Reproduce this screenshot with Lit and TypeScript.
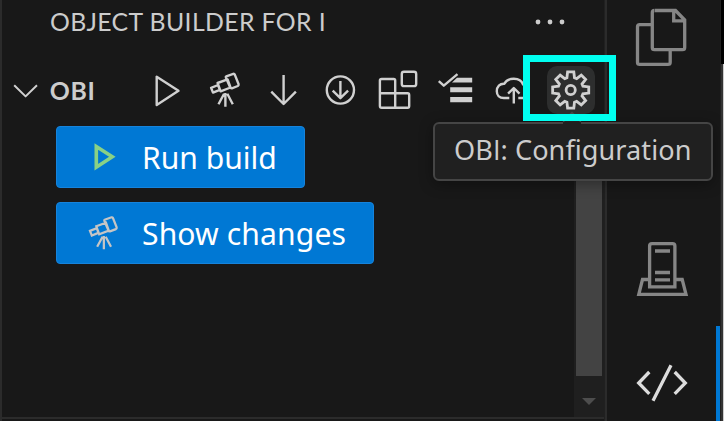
import { LitElement, html, css, svg } from "lit";

const scope = svg`<path d="M210.8 87.8 217.8 85 219.5 89.8 212.7 92.6Z M217.3 83 227.3 79.4 230.2 87.5 220.3 91.3Z M225.9 76.3 233 73.8Q234 73.6 234.5 74.6L238.3 84.2Q238.5 85.4 237.5 86L231.5 88.3Q230.2 88.4 229.8 87.2L225.6 77.5Q225.3 76.6 225.9 76.3 M223.8 93.8 218.2 104.2 M225.1 93 225.1 106.8 M227 93.8 232.5 104.2"/>`;

const gearPath = (() => {
  const pts: string[] = [];
  for (let i = 0; i < 8; i++) {
    const a = (i * Math.PI) / 4;
    for (const [r, d] of [[12.8, -0.3], [18.3, -0.17], [18.3, 0.17], [12.8, 0.3]]) {
      pts.push(`${(19.7 + r * Math.sin(a + d)).toFixed(2)} ${(20 - r * Math.cos(a + d)).toFixed(2)}`);
    }
  }
  return `M${pts.join("L")}Z`;
})();

const toolIcons = [
  svg`<path d="M156.7 76.7V105L178.5 90.8Z"/>`,
  scope,
  svg`<path d="M284 75V104M271.7 91.7 284 104 296.3 91.7"/>`,
  svg`<circle cx="340.5" cy="90" r="13.6"/><path d="M340.5 81V98M332.8 90.6 340.5 98.2 348.2 90.6"/>`,
  svg`<path d="M381.5 79H393.5Q395 79 395 80.5V93.3H407.5Q409 93.3 409 95V106Q409 107.8 407.5 107.8H381.5Q379.7 107.8 379.7 106V80.5Q379.7 79 381.5 79M379.7 93.3H395V107.8"/><rect x="401.6" y="71.7" width="14.4" height="14.4" rx="2.2"/>`,
  svg`<path d="M439.3 81 444.3 85.7 458 74.2"/><path stroke="none" fill="#d0d0d0" d="M457.5 77.7H472.7V82.5H452.5ZM450.7 87.2H472.7V92.3H450.7ZM450.7 97H472.7V102.2H450.7Z"/>`,
  svg`<path d="M509.5 98H504C499.5 98 497 95 497 91.3 497 86.5 500 83.4 504.6 83.7 506.3 80.5 509.8 78.8 514 78.8 518.6 78.8 522.2 81.3 523.3 84.6H526M526 98H518.5M514 88V103.5M508.3 93.7 514 88 519.7 93.7"/>`,
];

class AppRoot extends LitElement {
  static styles = css`
    :host { display: block; width: 724px; height: 421px; }
    * { box-sizing: border-box; }
    svg { display: block; fill: none; flex: none; overflow: visible; }
    .window { position: relative; display: grid; grid-template-columns: 605px 116px 3px; width: 724px; height: 421px; overflow: hidden; background: #181818; color: #ccc; font-family: "Noto Sans", sans-serif; }
    .side { border-left: 2px solid #2b2b2b; border-right: 1px solid #202020; display: flex; flex-direction: column; min-width: 0; }
    .title { height: 56px; display: flex; align-items: flex-start; padding-left: 48px; white-space: nowrap; }
    .title svg { margin-left: auto; margin-right: 39.5px; margin-top: 18.5px; fill: #ccc; }
    .caption { font-family: Lato, sans-serif; font-size: 24.8px; letter-spacing: 0.38px; line-height: 32px; margin-top: 6px; }
    .tools { height: 68px; display: flex; align-items: flex-start; stroke: #d0d0d0; stroke-width: 2.4; stroke-linejoin: round; }
    .name { font-family: Lato, sans-serif; font-weight: 700; font-size: 24.8px; letter-spacing: 0.7px; line-height: 32px; width: 88.3px; flex: none; margin-top: 19px; }
    .content { display: grid; grid-template-columns: 1fr 30px; height: 293px; flex: none; }
    .buttons { padding: 2px 0 0 54px; display: flex; flex-direction: column; align-items: flex-start; gap: 14px; }
    .action { height: 62px; width: 249px; display: flex; align-items: center; border: 1px solid #1683db; border-radius: 4px; background: #0078d4; color: #fff; font-size: 30.1px; white-space: nowrap; }
    .wide { width: 318px; letter-spacing: 0.12px; }
    .action svg { width: 85px; height: 60px; }
    .bar { background: #1f1f1f; display: flex; flex-direction: column; align-items: center; }
    .thumb { width: 26px; height: 252px; background: #434343; flex: none; }
    .bar svg { margin-top: 22px; fill: #4d4d4d; }
    .bottom { flex: 1; border-top: 2px solid #2b2b2b; }
    .activity { border-left: 2px solid #2b2b2b; border-right: 1px solid #202020; position: relative; display: flex; flex-direction: column; stroke: #868686; stroke-width: 3.3; }
    .marker { position: absolute; right: 0; top: 326px; width: 4px; height: 95px; background: #0078d4; }
    .edge { background: linear-gradient(#000 64px, transparent 64px), linear-gradient(90deg, #333 2px, #ccc 2px); }
    .tip { position: absolute; left: 433px; top: 122px; width: 280px; height: 59px; border: 2px solid #454545; border-radius: 6px; background: #202020; box-shadow: 0 3px 14px rgba(0,0,0,.36); font-size: 27.1px; letter-spacing: 0.06px; line-height: 52px; padding-left: 19px; white-space: nowrap; }
    .plain { font-family: "Open Sans", sans-serif; }
    .gear { position: absolute; left: 547px; top: 66px; width: 48px; height: 48px; border-radius: 10px; background: #2d2e2e; padding: 4px; }
    .pointer { position: absolute; left: 563px; top: 112px; }
    .frame { position: absolute; left: 523px; top: 55px; width: 93px; height: 66px; border: 7px solid #00fff0; }
  `;
  render() {
    return html`<div class="window">
      <div class="side">
        <div class="title">
          <span class="caption">OBJECT BUILDER FOR I</span>
          <svg width="30" height="6"><circle cx="3" cy="3" r="2.4"/><circle cx="15" cy="3" r="2.4"/><circle cx="27" cy="3" r="2.4"/></svg>
        </div>
        <div class="tools">
          <svg width="47.7" height="68" viewBox="2 56 47.7 68" stroke-width="2"><path d="M14.2 85.3 25.6 96.4 37 85.3"/></svg>
          <span class="name">OBI</span>
          ${toolIcons.map((icon, i) => {
            const box = `${(138 + 57.7 * i).toFixed(1)} 56 57.7 68`;
            return html`<svg width="57.7" height="68" viewBox=${box}>${icon}</svg>`;
          })}
        </div>
        <div class="content">
          <div class="buttons">
            <div class="action"><svg viewBox="57 127 85 60" stroke="#89d185" stroke-width="3.6"><path d="M96.3 146.5V167.2L112.3 156.8Z"/></svg>Run build</div>
            <div class="action wide"><svg viewBox="57 203 85 60" stroke="#c5c5c5" stroke-width="2.3"><g transform="translate(-114.5 145.7) scale(.97)">${scope}</g></svg>Show changes</div>
          </div>
          <div class="bar"><div class="thumb"></div><svg width="14" height="7"><path d="M0 0H14L7 7Z"/></svg></div>
        </div>
        <div class="bottom"></div>
      </div>
      <div class="activity">
        <svg width="113" height="210" viewBox="607 0 113 210"><path d="M655 10.5H675.5L684.7 20V47.5Q684.7 49.7 682.5 49.7H654.5Q652.3 49.7 652.3 47.5V12.7Q652.3 10.5 654.5 10.5M673.7 11V20.8H684M652 24.6H639.7Q637.5 24.6 637.5 26.8V62.2Q637.5 64.4 639.7 64.4H668Q670.2 64.4 670.2 62.2V51"/></svg>
        <svg width="113" height="120" viewBox="607 210 113 120"><path d="M649.6 286.8V246Q649.6 243.6 652 243.6H672.5Q674.9 243.6 674.9 246V286.8ZM655 251H670M655 272.5H670M655 279.8H670M648.5 279.5H642.5L638.8 294.3H686L682.2 279.5H676"/></svg>
        <svg width="113" height="91" viewBox="607 330 113 91" stroke="#dcdcdc"><path d="M649.3 372 638.7 383 649.3 393.8M671 365.3 653 400.8M674.7 372 685.3 383 674.7 393.8"/></svg>
        <div class="marker"></div>
      </div>
      <div class="edge"></div>
      <div class="tip">OB<span class="plain">I</span>: Configuration</div>
      <div class="gear"><svg width="40" height="40" stroke="#d0d0d0" stroke-width="2.8"><path d=${gearPath}/><circle cx="19.7" cy="20" r="4.6"/></svg></div>
      <svg class="pointer" width="18" height="13"><path fill="#202020" d="M0 13V9L9 0 18 9V13Z"/><path stroke="#454545" stroke-width="2" d="M0 9.5 9 .8 18 9.5"/></svg>
      <div class="frame"></div>
    </div>`;
  }
}
customElements.define("app-root", AppRoot);
